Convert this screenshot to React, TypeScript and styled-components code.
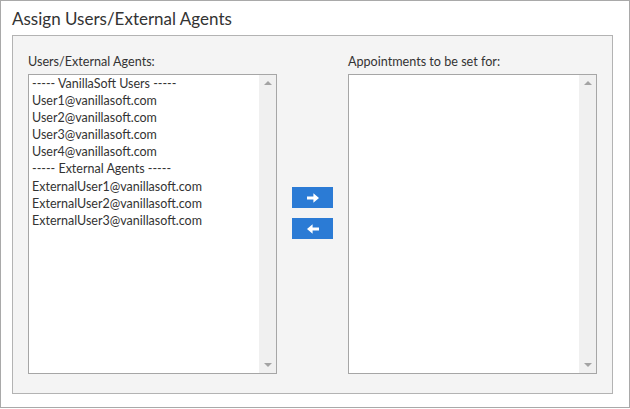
import React from 'react';
import styled, { createGlobalStyle } from 'styled-components';

const Global = createGlobalStyle`
  html, body { margin: 0; padding: 0; background: #ffffff; }
  body { font-family: Lato, "Open Sans", sans-serif; color: #333333; }
`;

const Frame = styled.div`
  box-sizing: border-box;
  width: 630px;
  height: 408px;
  border: 1px solid #a9a9a9;
  padding: 0 16px 13px 11px;
  display: flex;
  flex-direction: column;
`;

const Title = styled.h1`
  margin: 0;
  height: 34px;
  box-sizing: border-box;
  padding-top: 8px;
  font-size: 17px;
  line-height: 20px;
  font-weight: 400;
  color: #333333;
`;

const Panel = styled.div`
  flex: 1;
  display: flex;
  border: 1px solid #b3b3b3;
  background: #f4f4f4;
  padding: 0 15px 19px 15px;
  min-height: 0;
`;

const Column = styled.div`
  width: 249px;
  display: flex;
  flex-direction: column;
`;

const Label = styled.div`
  padding-top: 18px;
  margin-bottom: 4px;
  font-size: 12.6px;
  line-height: 16px;
  color: #333333;
`;

const ListBox = styled.div`
  flex: 1;
  display: flex;
  box-sizing: border-box;
  border: 1px solid #a6a6a6;
  background: #ffffff;
  min-height: 0;
`;

const Items = styled.ul`
  flex: 1;
  margin: 0;
  list-style: none;
  padding: 0 0 0 3px;
`;

const Item = styled.li`
  font-size: 12.5px;
  line-height: 17.1px;
  color: #333333;
  white-space: nowrap;
`;

const ScrollBar = styled.div`
  width: 17px;
  background: #f0f0f0;
  display: flex;
  flex-direction: column;
  justify-content: space-between;
  align-items: center;
  padding: 6px 0;
`;

const Arrow = styled.div<{ $dir: 'up' | 'down' }>`
  width: 0;
  height: 0;
  border-left: 4px solid transparent;
  border-right: 4px solid transparent;
  ${p => (p.$dir === 'up' ? 'border-bottom: 4px solid #a3a3a3;' : 'border-top: 4px solid #a3a3a3;')}
`;

const Middle = styled.div`
  flex: 1;
  display: flex;
  flex-direction: column;
  align-items: center;
  gap: 10px;
  padding-top: 151px;
`;

const MoveButton = styled.button`
  width: 41px;
  height: 21px;
  border: none;
  padding: 0;
  background: #2b7bd5;
  display: flex;
  align-items: center;
  justify-content: center;
  cursor: pointer;
`;

const RightArrowIcon = () => (
  <svg width="12" height="10" viewBox="0 0 12 10">
    <path d="M0 3.4h6.4V0.2L12 5 6.4 9.8V6.6H0z" fill="#ffffff" />
  </svg>
);

const LeftArrowIcon = () => (
  <svg width="12" height="10" viewBox="0 0 12 10">
    <path d="M12 3.4H5.6V0.2L0 5 5.6 9.8V6.6H12z" fill="#ffffff" />
  </svg>
);

const Scroll = () => (
  <ScrollBar>
    <Arrow $dir="up" />
    <Arrow $dir="down" />
  </ScrollBar>
);

const users = [
  '----- VanillaSoft Users -----',
  'User1@vanillasoft.com',
  'User2@vanillasoft.com',
  'User3@vanillasoft.com',
  'User4@vanillasoft.com',
  '----- External Agents -----',
  'ExternalUser1@vanillasoft.com',
  'ExternalUser2@vanillasoft.com',
  'ExternalUser3@vanillasoft.com',
];

export default function App() {
  return (
    <>
      <Global />
      <Frame>
        <Title>Assign Users/External Agents</Title>
        <Panel>
          <Column>
            <Label>Users/External Agents:</Label>
            <ListBox>
              <Items>
                {users.map(u => (
                  <Item key={u}>{u}</Item>
                ))}
              </Items>
              <Scroll />
            </ListBox>
          </Column>
          <Middle>
            <MoveButton aria-label="Add">
              <RightArrowIcon />
            </MoveButton>
            <MoveButton aria-label="Remove">
              <LeftArrowIcon />
            </MoveButton>
          </Middle>
          <Column>
            <Label>Appointments to be set for:</Label>
            <ListBox>
              <Items />
              <Scroll />
            </ListBox>
          </Column>
        </Panel>
      </Frame>
    </>
  );
}
